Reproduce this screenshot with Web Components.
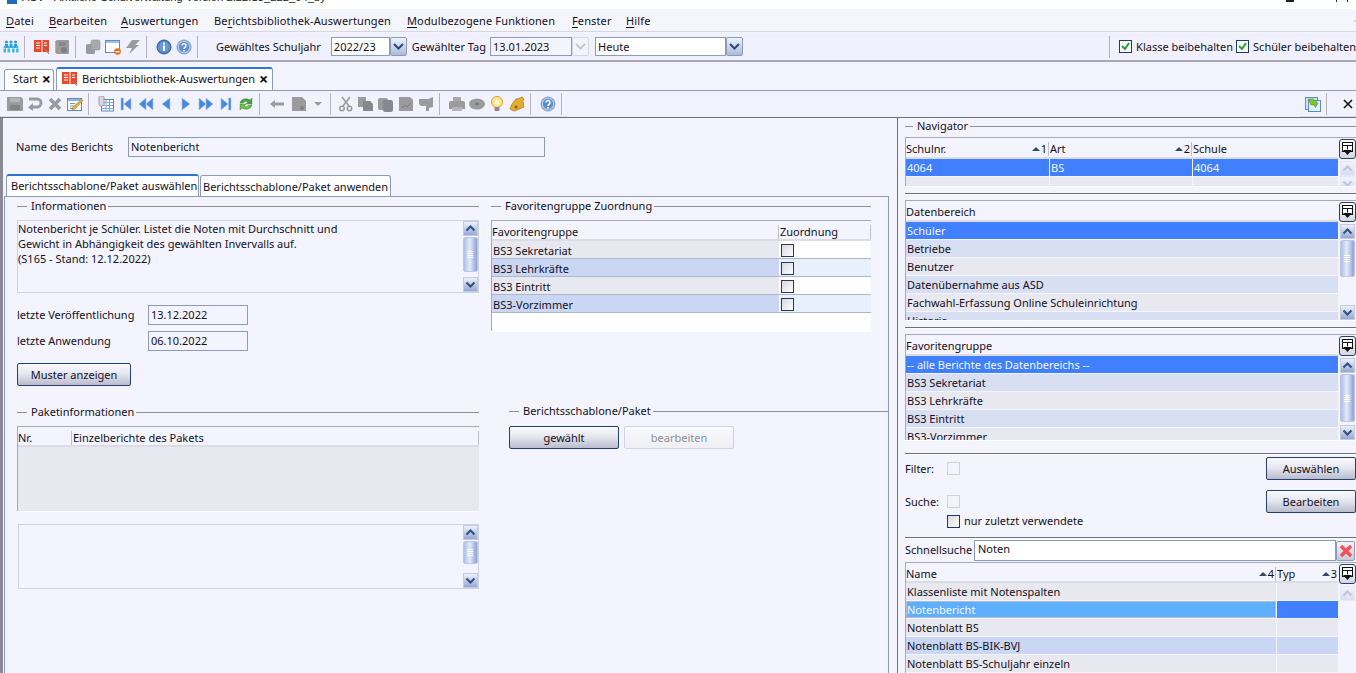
<!DOCTYPE html>
<html lang="de">
<head>
<meta charset="utf-8">
<title>ASV</title>
<style>
  html, body { margin: 0; height: 673px; overflow: hidden; background: #f3f4fe; }
  body { font: 11px/14px "Noto Sans", "Liberation Sans", sans-serif; color: #14101c; }
</style>
</head>
<body>
<asv-app></asv-app>

<script>
  // small helper: one shadow root per element, markup + style from the class
  class Base extends HTMLElement {
    connectedCallback() {
      if (this.shadowRoot) return;
      this.attachShadow({ mode: "open" });
      this.shadowRoot.innerHTML = this.markup();
    }
    markup() { return "<slot></slot>"; }
  }

  const GREY = "#9b9b9f";
  const NAV = 'fill="#4a88e0" stroke="#a4c6f0" stroke-width=".6"';
  const ICONS = {
    logo: `<g fill="#2b9fd8"><circle cx="3.5" cy="3" r="1.6"/><circle cx="8" cy="3" r="1.6"/><circle cx="12.5" cy="3" r="1.6"/><rect x="2" y="5" width="3" height="4"/><rect x="6.5" y="5" width="3" height="4"/><rect x="11" y="5" width="3" height="4"/></g><g fill="#4bb6e6"><circle cx="1.8" cy="8" r="1.3"/><circle cx="5.8" cy="8" r="1.3"/><circle cx="10.2" cy="8" r="1.3"/><circle cx="14.2" cy="8" r="1.3"/><rect x=".5" y="9.5" width="2.6" height="4"/><rect x="4.5" y="9.5" width="2.6" height="4"/><rect x="9" y="9.5" width="2.6" height="4"/><rect x="13" y="9.5" width="2.6" height="4"/></g>`,
    book: `<path d="M0 1h7.500v12H0zM8.500 1H15v12H8.500z" fill="#e8492a"/><path d="M2 4h4M2 6.500h4M2 9h4M10 4h3M10 6.500h3" stroke="#fff" stroke-width="1"/><path d="M12 11l3 4" stroke="#8a8a8a" stroke-width="1.200"/>`,
    notebook: `<rect x="2" y="1" width="13" height="14" rx="1" fill="${GREY}"/><path d="M2 3h-1M2 5h-1M2 7h-1M2 9h-1M2 11h-1M2 13h-1" stroke="#777"/><path d="M5 4h7M5 6h7" stroke="#777"/><circle cx="10" cy="11" r="3" fill="#808084"/>`,
    copies: `<rect x="1" y="5" width="9" height="10" rx="1.500" fill="${GREY}"/><rect x="6" y="1" width="9" height="10" rx="1.500" fill="#a9a9ad" stroke="#8a8a8e" stroke-width=".5"/>`,
    winbadge: `<rect x=".5" y="1.500" width="14" height="12" fill="#fff" stroke="#5b8cc8"/><rect x="1" y="2" width="13" height="2" fill="#9cc0ea"/><circle cx="12.500" cy="12.500" r="3.300" fill="#e8701e"/><rect x="10.500" y="12" width="4" height="1.300" fill="#fff"/>`,
    bolt: `<path d="M7 1h8L10 6h4L4 15l3-6H1z" fill="${GREY}"/>`,
    info: `<circle cx="8" cy="8" r="7" fill="#4f86c6" stroke="#2d5f9e"/><circle cx="8" cy="8" r="5" fill="#6a9bd6"/><rect x="7" y="6.500" width="2" height="5.500" fill="#fff"/><rect x="7" y="3.500" width="2" height="2" fill="#fff"/>`,
    help: `<circle cx="8" cy="8" r="7" fill="#a6bfe2" stroke="#7d9ccb"/><circle cx="8" cy="8" r="5" fill="#5c8dd0"/><path d="M6 6.500a2 2 0 1 1 3 1.800c-.8.500-1 .8-1 1.700" fill="none" stroke="#fff" stroke-width="1.500"/><rect x="7.200" y="11" width="1.600" height="1.600" fill="#fff"/>`,
    save: `<path d="M0 1h14l2 2v12H0z" fill="${GREY}"/><rect x="3" y="2" width="10" height="4" fill="#b5b5b8"/><rect x="3" y="9" width="10" height="5" fill="#848488"/>`,
    undo: `<path d="M2 3h8a4 4 0 0 1 0 8H4" fill="none" stroke="${GREY}" stroke-width="3"/><path d="M6 7L1 11.500 6 15z" fill="${GREY}"/>`,
    cross: `<path d="M3 3l10 10M13 3L3 13" stroke="${GREY}" stroke-width="3.600"/>`,
    edit: `<rect x=".5" y="2.500" width="14" height="12" fill="#fff" stroke="#5b8cc8"/><rect x="1" y="3" width="13" height="2" fill="#8db4e6"/><path d="M3 7.500h5M3 10h4M3 12.500h3" stroke="#6a93c8"/><path d="M14.500 3l1.500 1.500L8 13l-3 1 1-3z" fill="#e8b13a" stroke="#a87818" stroke-width=".5"/>`,
    doctable: `<rect x="3.500" y="3.500" width="12" height="11.500" fill="#fff" stroke="#5b8cc8"/><path d="M4 6.500h11M4 9.500h11M4 12.500h11M8 4v11M11.500 4v11" stroke="#7faad8"/><rect x="1" y="0" width="5" height="10" rx="1.500" fill="#d8d8dc" stroke="#9a9aa0"/>`,
    first: `<rect x="3" y="2" width="2.500" height="12" ${NAV}/><path d="M13 2L6 8l7 6z" ${NAV}/>`,
    prev2: `<path d="M8 2L1 8l7 6zM15 2L8 8l7 6z" ${NAV}/>`,
    prev: `<path d="M12 2L4 8l8 6z" ${NAV}/>`,
    next: `<path d="M4 2l8 6-8 6z" ${NAV}/>`,
    next2: `<path d="M1 2l7 6-7 6zM8 2l7 6-7 6z" ${NAV}/>`,
    last: `<path d="M3 2l7 6-7 6z" ${NAV}/><rect x="10.500" y="2" width="2.500" height="12" ${NAV}/>`,
    refresh: `<path d="M2 7a6 5 0 0 1 10-3l2-2v6H8l2-2a3.500 3 0 0 0-5 1z" fill="#4aa33e" stroke="#2f7d2a" stroke-width=".4"/><path d="M14 9a6 5 0 0 1-10 3l-2 2V8h6l-2 2a3.500 3 0 0 0 5-1z" fill="#6cc04a" stroke="#2f7d2a" stroke-width=".4"/>`,
    left: `<path d="M1 8l5-4v2.500h9v3H6V12z" fill="${GREY}"/>`,
    doc: `<path d="M1 1h10l4 4v10H1z" fill="${GREY}"/><circle cx="11" cy="12" r="2" fill="#7f7f83"/>`,
    drop: `<path d="M3 6h8L7 10z" fill="${GREY}"/>`,
    scissors: `<path d="M12 1L5 10M4 1l7 9" stroke="${GREY}" stroke-width="1.600"/><circle cx="4" cy="12.500" r="2.200" fill="none" stroke="${GREY}" stroke-width="1.500"/><circle cx="11.500" cy="12.500" r="2.200" fill="none" stroke="${GREY}" stroke-width="1.500"/>`,
    copy: `<path d="M0 1h8v10H0z" fill="${GREY}"/><path d="M5 5h7l3 3v7H5z" fill="#88888c"/>`,
    paste: `<rect x="0" y="2" width="10" height="12" rx="2" fill="${GREY}"/><rect x="5" y="4" width="10" height="12" rx="2" fill="#88888c"/>`,
    report: `<path d="M1 1h11l3 3v11H1z" fill="${GREY}"/><path d="M4 12l3-3 2 2 4-4" stroke="#777" fill="none"/>`,
    stamp: `<path d="M1 3h9l5-2v10l-4 1v3H8v-5H3L1 8z" fill="${GREY}"/>`,
    printer: `<path d="M4 1h8v5H4z" fill="#a8a8ac"/><path d="M0 7q0-2 2-2h12q2 0 2 2v6H0z" fill="${GREY}"/><rect x="3" y="11" width="10" height="4" fill="#b5b5b8"/>`,
    disc: `<ellipse cx="8" cy="8" rx="8" ry="5.500" fill="${GREY}"/><ellipse cx="8" cy="8" rx="2" ry="1.200" fill="#777"/>`,
    bulb: `<circle cx="8" cy="6" r="5.500" fill="#fbe58a" stroke="#e0a028"/><circle cx="8" cy="6" r="2.500" fill="#fff8d8"/><rect x="5.500" y="11" width="5" height="4" rx="1" fill="#8a8a90"/>`,
    bell: `<path d="M13 1l2 2-1 2 1 6-9 4q-3 0-5-2l2-5 4-5 4-1z" fill="#e2ac30" stroke="#9a6c14" stroke-width=".6"/><circle cx="7" cy="11" r="1.500" fill="#8a5c10"/>`,
    greenwin: `<rect x=".5" y="1.500" width="12" height="12" fill="#cfe2f8" stroke="#5b8cc8"/><rect x="3.500" y="4.500" width="12" height="11" fill="#e4effb" stroke="#5b8cc8"/><path d="M3 3h5l5 4-2.500 4.500L9 9H6z" fill="#7cc62c" stroke="#3f8a18" stroke-width=".5"/>`,
    close: `<path d="M4 4l8 8M12 4l-8 8" stroke="#111" stroke-width="1.600"/>`,
    redx: `<path d="M3 3l10 10M13 3L3 13" stroke="#f0505a" stroke-width="3.600"/>`,
    chooser: `<rect x="2.500" y="1.500" width="10" height="9" fill="#fff" stroke="#111"/><path d="M2.500 4.500h10M7.500 4.500v4" stroke="#111"/><path d="M3 9h9l-4.500 5z" fill="#111"/>`,
    spark: `<path d="M8 2v12M2 8h12M4 4l8 8M12 4l-8 8" stroke="#cfcfd6" stroke-width="1.400"/>`
  };

  class AsvIcon extends Base {
    markup() {
      const w = this.getAttribute("w") || 16;
      return `<style>:host{display:block;flex:none;width:${w}px;height:16px;line-height:0}</style>
        <svg width="${w}" height="16" viewBox="0 0 ${w} 16">${ICONS[this.getAttribute("name")] || ""}</svg>`;
    }
  }

  class AsvVsep extends Base {
    markup() {
      return `<style>:host{display:block;flex:none;width:1px;height:22px;margin:0 5px 0 1px;background:#b4b4bc}</style>`;
    }
  }

  class AsvHsep extends Base {
    markup() {
      return `<style>:host{display:block;height:1px;background:#6e6e7c;border-bottom:1px solid #fff}</style>`;
    }
  }

  class AsvToolbar extends Base {
    markup() {
      return `<style>:host{display:flex;align-items:center;gap:4px;flex:none;box-sizing:border-box}</style><slot></slot>`;
    }
  }

  class AsvMenubar extends Base {
    markup() {
      return `<style>
        :host{display:flex;align-items:center;height:21px;padding:1px 0 0 6px;background:#f5f5fc;border-bottom:1px solid #d6d6e2;flex:none;letter-spacing:.13px}
        ::slotted(span){flex:none}
      </style><slot></slot>`;
    }
  }

  class AsvGroup extends Base {
    markup() {
      return `<style>
        :host{display:flex;align-items:center;height:16px;gap:2px}
        .a{width:var(--lead,10px);height:1px;background:#8e8e98;margin-right:2px}
        .b{flex:1;height:1px;background:#8e8e98}
      </style><div class="a"></div><slot></slot><div class="b"></div>`;
    }
  }

  class AsvInput extends Base {
    markup() {
      return `<style>
        :host{display:flex;align-items:center;box-sizing:border-box;height:20px;padding:0 2px;border:1px solid #8b9cba;background:var(--input-bg,#f3f4fe)}
      </style><slot></slot>`;
    }
  }

  class AsvCombo extends Base {
    markup() {
      const off = this.hasAttribute("disabled");
      return `<style>
        :host{display:flex;height:19px;box-sizing:border-box;flex:none}
        .f{flex:1;display:flex;align-items:center;padding:0 2px;border:1px solid #8b9cba;background:${off ? "#f3f4fe" : "#fff"}}
        .b{width:15px;border:1px solid ${off ? "#d4d6e0" : "#8b9cba"};border-radius:2px;background:${off ? "#f3f4fa" : "linear-gradient(#eef2fb,#a8bbdc)"};display:flex;align-items:center;justify-content:center}
        path{fill:none;stroke:${off ? "#c8c8d0" : "#2f4a78"};stroke-width:2}
      </style><div class="f"><slot></slot></div><div class="b"><svg width="11" height="8"><path d="M1 1l4.500 4.500L10 1"/></svg></div>`;
    }
  }

  class AsvCheck extends Base {
    markup() {
      const on = this.hasAttribute("checked"), off = this.hasAttribute("disabled");
      return `<style>
        :host{display:inline-flex;align-items:center;gap:4px;flex:none}
        .c{width:13px;height:13px;box-sizing:border-box;flex:none;border:1px solid ${off ? "#d0d0d8" : "#1f3a64"};
           background:${off ? "#f4f4f8" : on ? "#fff" : "linear-gradient(135deg,#d8d8de,#fff)"};}
        svg{display:block}
      </style><div class="c">${on ? '<svg width="11" height="11"><path d="M2 5l3 3 4-6" fill="none" stroke="#1fa030" stroke-width="2"/></svg>' : ""}</div><slot></slot>`;
    }
  }

  class AsvButton extends Base {
    markup() {
      const off = this.hasAttribute("disabled");
      return `<style>
        :host{display:flex;align-items:center;justify-content:center;box-sizing:border-box;height:23px;flex:none;border-radius:2px;
          border:1px solid ${off ? "#d2d3dc" : "#23406e"};color:${off ? "#8f8f96" : "inherit"};
          background:${off ? "linear-gradient(#fafafd,#eeeef4)" : "linear-gradient(#fbfbfe 0,#e6e7f0 45%,#b9bccb 100%)"}}
      </style><slot></slot>`;
    }
  }

  class AsvScrollbar extends Base {
    markup() {
      const t = this.getAttribute("thumb");
      const faded = this.hasAttribute("faded");
      const btn = d => `<div class="b"><svg width="13" height="13"><path d="${d}"/></svg></div>`;
      return `<style>
        :host{display:flex;flex-direction:column;align-items:center;flex:1;min-height:0;width:16px;${faded ? "opacity:.28;" : ""}}
        .b{flex:none;width:15px;height:15px;box-sizing:border-box;border:1px solid #fff;outline:1px solid #c2cbe0;outline-offset:-1px;background:linear-gradient(#eef2fb,#93a8d2);}
        .t{flex:none;width:15px;height:${t || 0}px;box-sizing:border-box;margin-top:1px;border:1px solid #bcc8e6;border-radius:2px;background:linear-gradient(90deg,#aebfe6,#e4ebfb 45%,#8aa2d6);
           display:${t ? "flex" : "none"};flex-direction:column;align-items:center;justify-content:center;gap:1px}
        .t i{display:block;width:6px;height:1px;background:#fff}
        .s{flex:1;min-height:0}
        svg{display:block}
        path{fill:none;stroke:#33507e;stroke-width:2}
      </style>${btn("M2.500 8.500l4-4 4 4")}<div class="t"><i></i><i></i><i></i><i></i></div><div class="s"></div>${btn("M2.500 4.500l4 4 4-4")}`;
    }
  }

  // bordered list: a head row, the rows, and an optional side column for chooser + scrollbar
  class AsvGrid extends Base {
    markup() {
      return `<style>
        :host{display:grid;grid-template-columns:minmax(0,1fr) auto;box-sizing:border-box;overflow:hidden;border-top:1px solid #a9a9b6;border-bottom:1px solid #fff}
        .m{display:flex;flex-direction:column;min-width:0;min-height:0;overflow:hidden;border-left:1px solid #a9a9b6}
        .h{flex:none;height:var(--head-h,21px);box-sizing:border-box;padding-top:3px;border-bottom:2px solid #dcdce4}
        .r{flex:1;min-height:0;overflow:hidden;background:var(--body-bg,#f3f4fe)}
        .side{display:flex;flex-direction:column;min-height:0}
        ::slotted([slot=side]){margin-left:1px}
      </style>
      <div class="m"><div class="h"><slot name="head"></slot></div><div class="r"><slot></slot></div></div>
      <div class="side"><slot name="side"></slot></div>`;
    }
  }

  class AsvRow extends Base {
    markup() {
      const k = this.getAttribute("kind") || "plain";
      const bg = { plain: "#e8e8f0", alt: "#d9dff3", blue: "#c9d7f5", sel: "#4080ff", head: "transparent" }[k];
      const head = k === "head";
      return `<style>
        :host{display:grid;grid-template-columns:var(--cols,1fr);column-gap:1px;box-sizing:border-box;height:${head ? "100%" : "var(--row-h,18px)"};
          ${k === "sel" ? "color:#f2f6ff;" : ""}${head ? "" : "border-bottom:1px solid var(--row-line,transparent);"}--row-bg:${bg}}
        ::slotted(*){display:flex;align-items:center;min-width:0;white-space:nowrap;padding-left:${head ? 0 : 1}px;padding-top:${head ? 0 : "var(--row-pad,0)"};background:var(--cell-bg,var(--row-bg))}
      </style><slot></slot>`;
    }
  }

  class AsvHead extends Base {
    markup() {
      const n = this.getAttribute("sort");
      const noline = this.hasAttribute("noline");
      return `<style>
        .w{flex:1;display:flex;align-items:center;min-width:0}
        .g{flex:1}
        .tri{width:0;height:0;border:4px solid transparent;border-top:0;border-bottom:4px solid #324a68;margin-right:1px}
        .l{width:1px;height:14px;background:#c0c0cc;${noline ? "display:none" : ""}}
        .n{padding-right:1px}
      </style><div class="w"><span><slot></slot></span><span class="g"></span>${n ? `<span class="tri"></span><span class="n">${n}</span>` : ""}</div><div class="l"></div>`;
    }
  }

  class AsvTab extends Base {
    markup() {
      const on = this.hasAttribute("active");
      const h = this.getAttribute("h") || 22;
      return `<style>
        :host{display:flex;align-items:center;flex:none;box-sizing:border-box;height:${h}px;gap:4px;padding:0 4px;background:#fff;
          border:1px solid #8b9cba;border-bottom:0;border-top:${on ? "2px solid #2f74d8" : "1px solid #8b9cba"};border-radius:3px 3px 0 0}
        ::slotted(.x){font-size:16px;font-weight:bold;line-height:1;color:#111}
      </style><slot></slot>`;
    }
  }

  class AsvChooser extends Base {
    markup() {
      return `<style>
        :host{display:flex;align-items:center;justify-content:center;box-sizing:border-box;flex:none;width:17px;height:20px;margin:1px 0 2px;border:1px solid #23406e;border-radius:3px;background:linear-gradient(#fafafd,#d4d6e2)}
      </style><asv-icon name="chooser" w="15"></asv-icon>`;
    }
  }

  class AsvRedx extends Base {
    markup() {
      return `<style>
        :host{display:flex;align-items:center;justify-content:center;box-sizing:border-box;flex:none;width:19px;height:20px;border:1px solid #8b9cba;border-radius:2px;background:linear-gradient(#f4f4f8,#c8cad6)}
      </style><asv-icon name="redx"></asv-icon>`;
    }
  }

  class AsvApp extends Base {
    markup() {
      const I = (n, s = "") => `<asv-icon name="${n}"${s}></asv-icon>`;
      const btnChooser = `<asv-chooser slot="side"></asv-chooser>`;
      return `<style>
        :host{display:flex;flex-direction:column;width:1356px;height:673px;overflow:hidden;background:#f3f4fe}
        .title{height:9px;background:#fff;overflow:hidden;display:flex;flex:none;font:11.25px "Liberation Sans",sans-serif;color:#222;padding-left:7px;gap:5px}
        .title .logo{width:10px;height:4px;background:#1a6fb8;flex:none}
        .title .t{margin-top:-10px;line-height:14px;white-space:nowrap}
        .title .g{flex:1}
        .title .w1{width:8px;height:2px;background:#222;margin-right:37px}
        .title .w2{width:10px;height:2px;border:solid #222;border-width:0 1px;margin-right:8px}
        u{text-underline-offset:2px}
        .tb1{height:27px;padding-left:4px;margin-top:1px;background:#f0f1fc;border-bottom:2px solid #a8a8b2;box-sizing:content-box;white-space:nowrap}
        .tabs{display:flex;align-items:flex-end;gap:2px;height:29px;flex:none;box-sizing:border-box;padding-left:4px;border-bottom:1px solid #8b9cba}
        .tb2wrap{display:flex;height:26px;flex:none;background:#f1f2fd;border-bottom:1px solid #6e6e7c}
        .tb2{padding-left:7px;height:26px;border-bottom:1px solid #dcdce6;width:567px}
        .tb3{margin-left:auto;width:56px;height:26px;border-bottom:1px solid #dcdce6;padding-left:5px}
        .main{flex:1;min-height:0;display:grid;grid-template-columns:898px 1fr;overflow:hidden}
        .left{display:flex;flex-direction:column;box-sizing:border-box;min-height:0;border-left:3px solid #8a8a96;border-right:1px solid #6e6e7c;padding-left:1px}
        .name{display:flex;align-items:center;margin:19px 0 0 12px;height:20px;flex:none}
        .name span{width:112px}
        .subtabs{display:flex;align-items:flex-end;gap:1px;margin-top:17px;padding-left:2px;height:22px;flex:none}
        .pane{flex:1;min-height:0;width:885px;box-sizing:border-box;border:solid #8b9cba;border-width:1px 1px 0 1px;padding:1px 0 0 12px;display:grid;grid-template-columns:462px 397px;column-gap:12px;align-content:start}
        .col{display:flex;flex-direction:column;min-width:0}
        .text{display:flex;box-sizing:border-box;border:1px solid #cfd2e2;line-height:15px}
        .text div.c{flex:1}
        .text .sb{display:flex;flex-direction:column}
        .row{display:flex;align-items:center;height:20px;flex:none}
        .row span{width:131px}
        .row asv-input{width:100px}
        .right{display:flex;flex-direction:column;padding-left:7px;min-height:0;overflow:hidden}
        .right>*{flex:none}
        .ctl{display:flex;align-items:center;flex:none}
        .ctl .lab{width:42px}
        .ctl .g{flex:1}
        .ctl asv-button{width:90px}
        .hi{background:#5cb0ff !important;outline:1px solid #b8bcc8;outline-offset:-1px;color:#f2f6ff}
      </style>

      <div class="title"><div class="logo"></div><div class="t">ASV - Amtliche Schulverwaltung Version 2.22.13_222_04_by</div><div class="g"></div><div class="w1"></div><div class="w2"></div></div>

      <asv-menubar>
        <span style="width:43px"><u>D</u>atei</span>
        <span style="width:72px"><u>B</u>earbeiten</span>
        <span style="width:93px"><u>A</u>uswertungen</span>
        <span style="width:193px">Be<u>r</u>ichtsbibliothek-Auswertungen</span>
        <span style="width:165px"><u>M</u>odulbezogene Funktionen</span>
        <span style="width:54px"><u>F</u>enster</span>
        <span><u>H</u>ilfe</span>
        <asv-icon name="spark" style="margin-left:auto;margin-right:-12px"></asv-icon>
      </asv-menubar>

      <asv-toolbar class="tb1">
        ${I("logo", ' style="margin-left:-1px"')}<asv-vsep></asv-vsep>
        ${I("book")}${I("notebook")}<asv-vsep></asv-vsep>
        ${I("copies")}${I("winbadge")}${I("bolt")}<asv-vsep></asv-vsep>
        ${I("info")}${I("help")}<asv-vsep></asv-vsep>
        <span style="margin-left:9px;width:112px">Gewähltes Schuljahr</span>
        <asv-combo style="width:76px">2022/23</asv-combo>
        <span style="margin-left:1px;width:75px">Gewählter Tag</span>
        <asv-combo disabled style="width:99px">13.01.2023</asv-combo>
        <asv-combo style="width:148px;margin-left:2px">Heute</asv-combo>
        <asv-vsep style="margin-left:362px"></asv-vsep>
        <asv-check checked style="width:113px">Klasse beibehalten</asv-check>
        <asv-check checked>Schüler beibehalten</asv-check>
      </asv-toolbar>

      <div class="tabs">
        <asv-tab h="21" style="width:50px;padding:0 4px 2px 8px">Start<span class="x">×</span></asv-tab>
        <asv-tab active h="23" style="width:217px;padding:0 4px 2px 5px">${I("book")}<span style="width:174px;white-space:nowrap">Berichtsbibliothek-Auswertungen</span><span class="x">×</span></asv-tab>
      </div>

      <div class="tb2wrap">
        <asv-toolbar class="tb2">
          ${I("save")}${I("undo")}${I("cross")}${I("edit")}<asv-vsep></asv-vsep>
          ${I("doctable")}${I("first")}${I("prev2")}${I("prev")}${I("next")}${I("next2")}${I("last")}${I("refresh")}<asv-vsep></asv-vsep>
          ${I("left")}${I("doc", ' style="margin-left:2px"')}<asv-icon name="drop" w="14"></asv-icon><asv-vsep></asv-vsep>
          ${I("scissors", ' style="margin-left:-2px"')}${I("copy")}${I("paste")}${I("report")}${I("stamp")}<asv-vsep></asv-vsep>
          ${I("printer")}${I("disc")}${I("bulb")}${I("bell")}<asv-vsep></asv-vsep>
          ${I("help")}<asv-vsep></asv-vsep>
        </asv-toolbar>
        <asv-toolbar class="tb3">${I("greenwin")}<asv-vsep></asv-vsep><span style="width:5px"></span>${I("close")}</asv-toolbar>
      </div>

      <div class="main">
        <div class="left">
          <div class="name"><span>Name des Berichts</span><asv-input style="width:417px">Notenbericht</asv-input></div>
          <div class="subtabs">
            <asv-tab active h="22" style="width:193px;padding-bottom:1px;white-space:nowrap">Berichtsschablone/Paket auswählen</asv-tab>
            <asv-tab h="21" style="width:191px;padding:1px 2px 0;white-space:nowrap">Berichtsschablone/Paket anwenden</asv-tab>
          </div>
          <div class="pane">
            <div class="col">
              <asv-group>Informationen</asv-group>
              <div class="text" style="margin-top:6px;height:73px">
                <div class="c">Notenbericht je Schüler. Listet die Noten mit Durchschnitt und<br>Gewicht in Abhängigkeit des gewählten Invervalls auf.<br>(S165 - Stand: 12.12.2022)</div>
                <div class="sb"><asv-scrollbar thumb="35"></asv-scrollbar></div>
              </div>
              <div class="row" style="margin-top:12px"><span>letzte Veröffentlichung</span><asv-input>13.12.2022</asv-input></div>
              <div class="row" style="margin-top:6px"><span>letzte Anwendung</span><asv-input>06.10.2022</asv-input></div>
              <asv-button style="width:114px;margin-top:12px">Muster anzeigen</asv-button>
              <asv-group style="margin-top:18px">Paketinformationen</asv-group>
              <asv-grid style="margin-top:6px;height:86px;--cols:54px 1fr;--head-h:20px;--body-bg:#e8e8f0">
                <asv-row slot="head" kind="head"><asv-head>Nr.</asv-head><asv-head>Einzelberichte des Pakets</asv-head></asv-row>
              </asv-grid>
              <div class="text" style="margin:12px 0 0 1px;height:65px"><div class="c"></div><div class="sb"><asv-scrollbar thumb="23"></asv-scrollbar></div></div>
            </div>
            <div class="col">
              <asv-group style="width:380px">Favoritengruppe Zuordnung</asv-group>
              <asv-grid style="margin-top:6px;width:380px;height:112px;--cols:287px 1fr;--head-h:20px;--body-bg:#fff;--row-line:#aeb6c8;--row-pad:2px">
                <asv-row slot="head" kind="head"><asv-head>Favoritengruppe</asv-head><asv-head>Zuordnung</asv-head></asv-row>
                <asv-row><span>BS3 Sekretariat</span><span style="background:#fff"><asv-check></asv-check></span></asv-row>
                <asv-row kind="blue"><span>BS3 Lehrkräfte</span><span style="background:#e8effd"><asv-check></asv-check></span></asv-row>
                <asv-row><span>BS3 Eintritt</span><span style="background:#fff"><asv-check></asv-check></span></asv-row>
                <asv-row kind="blue"><span>BS3-Vorzimmer</span><span style="background:#e8effd"><asv-check></asv-check></span></asv-row>
              </asv-grid>
              <asv-group style="margin:71px 0 0 18px">Berichtsschablone/Paket</asv-group>
              <div style="display:flex;gap:5px;margin:7px 0 0 18px">
                <asv-button style="width:110px">gewählt</asv-button>
                <asv-button disabled style="width:110px">bearbeiten</asv-button>
              </div>
            </div>
          </div>
        </div>

        <div class="right">
          <asv-group style="--lead:8px">Navigator</asv-group>
          <asv-grid style="margin-top:3px;height:50px;--cols:143px 142px 1fr">
            <asv-row slot="head" kind="head"><asv-head sort="1">Schulnr.</asv-head><asv-head sort="2">Art</asv-head><asv-head noline>Schule</asv-head></asv-row>
            <asv-row kind="sel"><span>4064</span><span>BS</span><span>4064</span></asv-row>
            <asv-row><span></span><span></span><span></span></asv-row>
            ${btnChooser}<asv-scrollbar slot="side" faded></asv-scrollbar>
          </asv-grid>
          <asv-hsep style="margin-top:6px"></asv-hsep>
          <asv-grid style="margin-top:5px;height:121px">
            <asv-row slot="head" kind="head"><asv-head noline>Datenbereich</asv-head></asv-row>
            <asv-row kind="sel"><span>Schüler</span></asv-row>
            <asv-row kind="alt"><span>Betriebe</span></asv-row>
            <asv-row><span>Benutzer</span></asv-row>
            <asv-row kind="alt"><span>Datenübernahme aus ASD</span></asv-row>
            <asv-row><span>Fachwahl-Erfassung Online Schuleinrichtung</span></asv-row>
            <asv-row kind="alt"><span>Historie</span></asv-row>
            ${btnChooser}<asv-scrollbar slot="side" thumb="37"></asv-scrollbar>
          </asv-grid>
          <asv-hsep style="margin-top:6px"></asv-hsep>
          <asv-grid style="margin-top:5px;height:107px">
            <asv-row slot="head" kind="head"><asv-head noline>Favoritengruppe</asv-head></asv-row>
            <asv-row kind="sel"><span>-- alle Berichte des Datenbereichs --</span></asv-row>
            <asv-row kind="alt"><span>BS3 Sekretariat</span></asv-row>
            <asv-row><span>BS3 Lehrkräfte</span></asv-row>
            <asv-row kind="alt"><span>BS3 Eintritt</span></asv-row>
            <asv-row><span>BS3-Vorzimmer</span></asv-row>
            ${btnChooser}<asv-scrollbar slot="side" thumb="48"></asv-scrollbar>
          </asv-grid>
          <asv-hsep style="margin-top:12px"></asv-hsep>
          <div class="ctl" style="margin-top:2px"><span class="lab">Filter:</span><asv-check disabled></asv-check><span class="g"></span><asv-button>Auswählen</asv-button></div>
          <div class="ctl" style="margin-top:10px"><span class="lab">Suche:</span><asv-check disabled></asv-check><span class="g"></span><asv-button>Bearbeiten</asv-button></div>
          <div class="ctl" style="margin-top:1px;padding-left:42px"><asv-check>nur zuletzt verwendete</asv-check></div>
          <asv-hsep style="margin-top:9px"></asv-hsep>
          <div class="ctl" style="margin-top:1px;height:21px">
            <span style="width:69px;padding-bottom:1px">Schnellsuche</span>
            <asv-input style="width:362px;--input-bg:#fff;height:21px;padding:0 2px 3px 3px">Noten</asv-input>
            <asv-redx></asv-redx>
          </div>
          <asv-grid style="margin-top:1px;height:150px;--cols:370px 1fr;--head-h:20px;border-bottom:0">
            <asv-row slot="head" kind="head"><asv-head sort="4">Name</asv-head><asv-head sort="3" noline>Typ</asv-head></asv-row>
            <asv-row><span>Klassenliste mit Notenspalten</span><span></span></asv-row>
            <asv-row kind="sel"><span class="hi">Notenbericht</span><span></span></asv-row>
            <asv-row><span>Notenblatt BS</span><span></span></asv-row>
            <asv-row kind="blue"><span>Notenblatt BS-BIK-BVJ</span><span></span></asv-row>
            <asv-row><span>Notenblatt BS-Schuljahr einzeln</span><span></span></asv-row>
            ${btnChooser}<asv-scrollbar slot="side" faded></asv-scrollbar>
          </asv-grid>
        </div>
      </div>`;
    }
  }

  customElements.define("asv-icon", AsvIcon);
  customElements.define("asv-vsep", AsvVsep);
  customElements.define("asv-hsep", AsvHsep);
  customElements.define("asv-toolbar", AsvToolbar);
  customElements.define("asv-menubar", AsvMenubar);
  customElements.define("asv-group", AsvGroup);
  customElements.define("asv-input", AsvInput);
  customElements.define("asv-combo", AsvCombo);
  customElements.define("asv-check", AsvCheck);
  customElements.define("asv-button", AsvButton);
  customElements.define("asv-scrollbar", AsvScrollbar);
  customElements.define("asv-grid", AsvGrid);
  customElements.define("asv-row", AsvRow);
  customElements.define("asv-head", AsvHead);
  customElements.define("asv-tab", AsvTab);
  customElements.define("asv-chooser", AsvChooser);
  customElements.define("asv-redx", AsvRedx);
  customElements.define("asv-app", AsvApp);
</script>
</body>
</html>
